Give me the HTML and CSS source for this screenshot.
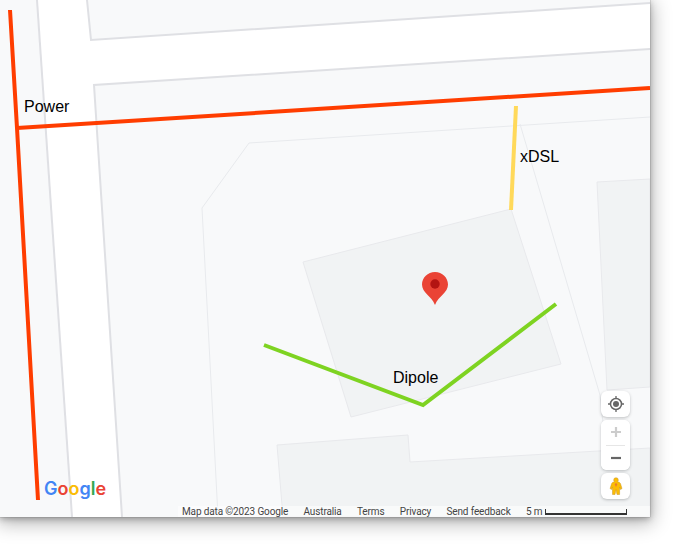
FILE: index.html
```html
<!DOCTYPE html>
<html lang="en">
<head>
<meta charset="utf-8">
<title>Map</title>
<link rel="stylesheet" href="styles.css">
</head>
<body>
<div class="map">
  <div class="viewport">
    <svg class="canvas" width="650" height="517" viewBox="0 0 650 517">
      <rect width="650" height="517" fill="#ffffff"/>
      <polygon class="lot" points="0,0 37,0 72,517 0,517"/>
      <polygon class="lot" points="87,0 650,0 650,3 91,40"/>
      <polygon class="lot" points="94,85 650,49 650,517 122,517"/>
      <polyline class="lot-edge" points="37,0 72,517"/>
      <polyline class="lot-edge" points="87,0 91,40 650,3"/>
      <polyline class="lot-edge" points="122,517 94,85 650,49"/>
      <polyline class="inner" points="650,117 249,143 202,208 218,517"/>
      <polyline class="inner" points="520,124 600,395 613,517"/>
      <polygon class="building" points="597,182 650,179 650,387 607,390"/>
      <polygon class="building" points="303,262 511,209 561,364 351,417"/>
      <polygon class="building" points="277,445 408,435 410,462 650,448 650,517 283,517"/>
      <polyline class="route power" points="10,10 17,128 38,500"/>
      <polyline class="route power" points="17,128 650,88"/>
      <polyline class="route xdsl" points="516,106 511,210"/>
      <polyline class="route dipole" points="264,345 423,405 556,304"/>
      <path d="M435 272c-7.300 0-13 5.600-13 12.600 0 8.200 9.500 11.500 13 20.400 3.500-8.900 13-12.200 13-20.400 0-7-5.700-12.600-13-12.600z" fill="#ea4335"/>
      <circle cx="435" cy="284" r="4.700" fill="#b31412"/>
    </svg>

    <span class="label label-power">Power</span>
    <span class="label label-xdsl">xDSL</span>
    <span class="label label-dipole">Dipole</span>

    <div class="logo"><span class="blue">G</span><span class="red">o</span><span class="yellow">o</span><span class="blue">g</span><span class="green">l</span><span class="red">e</span></div>

    <div class="controls">
      <button class="ctl" type="button" aria-label="My location">
        <svg width="18" height="18" viewBox="0 0 18 18">
          <circle cx="9" cy="9" r="5.500" fill="none" stroke="#666" stroke-width="1.500"/>
          <circle cx="9" cy="9" r="3" fill="#666"/>
          <path d="M9 1v2.500M9 14.500V17M1 9h2.500M14.500 9H17" stroke="#666" stroke-width="1.300"/>
        </svg>
      </button>
      <div class="zoom">
        <button class="zoom-btn" type="button" aria-label="Zoom in">
          <svg width="12" height="12" viewBox="0 0 12 12"><path d="M1 6h10M6 1v10" stroke="#ccc" stroke-width="2.200"/></svg>
        </button>
        <div class="zoom-sep"></div>
        <button class="zoom-btn" type="button" aria-label="Zoom out">
          <svg width="12" height="12" viewBox="0 0 12 12"><path d="M1 6h10" stroke="#666" stroke-width="2.200"/></svg>
        </button>
      </div>
      <button class="ctl" type="button" aria-label="Street View">
        <svg width="14" height="18" viewBox="0 0 14 18">
          <path d="M4.700 3a2.300 2.300 0 1 1 4.600 0c0 .8-.3 1.400-.9 1.800 1.700.2 2.800.9 3.200 2.200l1.400 4.600-1.500.9-.9-2.500V17.500H8L7 12.500l-1 5H3.500V10l-.9 2.500-1.500-.9L2.500 7c.4-1.300 1.500-2 3.100-2.200-.6-.4-.9-1-.9-1.800z" fill="#fbbc04" stroke="#c9962a" stroke-width=".5"/>
          <path d="M7 6l1.300 1.300L7 10 5.700 7.300z" fill="#ea7a30"/>
        </svg>
      </button>
    </div>

    <div class="footer">
      <span>Map data ©2023 Google</span>
      <span>Australia</span>
      <span>Terms</span>
      <span>Privacy</span>
      <span>Send feedback</span>
      <span class="scale">5 m<i class="scale-bar"></i></span>
    </div>
  </div>
</div>
</body>
</html>
```

FILE: styles.css
```css
html, body {
  margin: 0;
  padding: 0;
  height: 100%;
  background: #fff;
}

body {
  position: relative;
  min-height: 544px;
}

.map {
  position: relative;
  width: 649.500px;
  height: 517px;
  box-shadow: 0 0 1px 0 #666, 0 2px 6px 0 rgba(0, 0, 0, 0.25), 0 4px 18px 2px rgba(0, 0, 0, 0.3);
  font-family: "Liberation Sans", Arial, sans-serif;
}

.viewport {
  position: relative;
  width: 100%;
  height: 100%;
  overflow: hidden;
}

.canvas {
  display: block;
}

.lot { fill: #f8f9fa; }
.lot-edge { fill: none; stroke: #dfe0e4; stroke-width: 2; }
.inner { fill: none; stroke: #e8eaed; stroke-width: 1; }
.building { fill: #f1f3f4; stroke: #e8e9ec; stroke-width: 1; }
.route { fill: none; stroke-width: 4; }
.power { stroke: #ff3d00; }
.xdsl { stroke: #ffd95a; }
.dipole { stroke: #7ed321; }

.label {
  position: absolute;
  font-size: 16px;
  line-height: 18px;
  color: #000;
}
.label-power { left: 24px; top: 98px; }
.label-xdsl { left: 520px; top: 148px; }
.label-dipole { left: 393px; top: 369px; }

.logo {
  position: absolute;
  left: 44px;
  top: 477px;
  font-family: Inter, sans-serif;
  font-size: 18px;
  font-weight: 600;
  line-height: 24px;
}
.blue { color: #4285f4; }
.red { color: #ea4335; }
.yellow { color: #fbbc04; }
.green { color: #34a853; }

.controls {
  position: absolute;
  left: 601px;
  top: 391px;
  display: flex;
  flex-direction: column;
  gap: 3px;
  width: 29px;
}

.ctl, .zoom {
  background: #fff;
  border-radius: 6px;
  box-shadow: 0 1px 3px rgba(60, 64, 67, 0.3);
}

.ctl, .zoom-btn {
  display: flex;
  align-items: center;
  justify-content: center;
  width: 29px;
  height: 26px;
  padding: 0;
  border: 0;
  background: #fff;
  border-radius: 6px;
}

.zoom {
  display: flex;
  flex-direction: column;
  align-items: center;
}
.zoom-btn { height: 24.500px; }
.zoom-sep {
  width: 19px;
  height: 1px;
  background: #e6e6e6;
}

.footer {
  position: absolute;
  left: 178px;
  right: 0;
  bottom: 0;
  height: 11px;
  display: flex;
  align-items: center;
  gap: 15.300px;
  padding-left: 4px;
  background: rgba(255, 255, 255, 0.55);
  font-family: Roboto, sans-serif;
  font-size: 10px;
  letter-spacing: -0.130px;
  color: #444;
}

.scale {
  display: flex;
  align-items: center;
  gap: 3px;
}
.scale-bar {
  display: block;
  width: 82px;
  height: 6px;
  border: 1px solid #333;
  border-top: 0;
  border-bottom-width: 2px;
  box-sizing: border-box;
}
```
